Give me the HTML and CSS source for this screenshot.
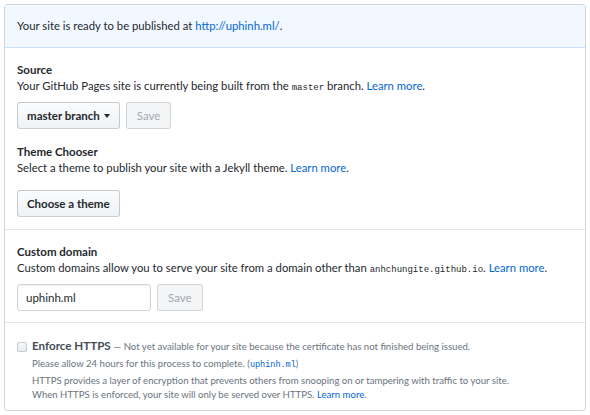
FILE: index.html
```html
<!DOCTYPE html>
<html>
<head>
<meta charset="utf-8">
<link rel="stylesheet" href="styles.css">
</head>
<body>
<div class="box">
  <div class="flash">Your site is ready to be published at <a href="#">http://uphinh.ml/</a>.</div>
  <div class="section">
    <div class="label">Source</div>
    <p class="desc">Your GitHub Pages site is currently being built from the <code>master</code> branch. <a href="#">Learn more</a>.</p>
    <div class="row">
      <button class="btn">master branch <span class="caret"></span></button>
      <button class="btn disabled">Save</button>
    </div>
    <div class="label theme-label">Theme Chooser</div>
    <p class="desc">Select a theme to publish your site with a Jekyll theme. <a href="#">Learn more</a>.</p>
    <div class="row row-theme">
      <button class="btn">Choose a theme</button>
    </div>
  </div>
  <div class="section domain">
    <div class="label">Custom domain</div>
    <p class="desc">Custom domains allow you to serve your site from a domain other than <code>anhchungite.github.io</code>. <a href="#">Learn more</a>.</p>
    <div class="row row-domain">
      <input class="input" type="text" value="uphinh.ml">
      <button class="btn disabled">Save</button>
    </div>
  </div>
  <div class="section https">
    <div class="check-row">
      <span class="checkbox"></span>
      <div class="check-body">
        <div class="check-title"><strong>Enforce HTTPS</strong> <span class="note">— Not yet available for your site because the certificate has not finished being issued.</span></div>
        <p class="note">Please allow 24 hours for this process to complete. (<a href="#" class="mono">uphinh.ml</a>)</p>
        <p class="note">HTTPS provides a layer of encryption that prevents others from snooping on or tampering with traffic to your site.</p>
        <p class="note">When HTTPS is enforced, your site will only be served over HTTPS. <a href="#">Learn more</a>.</p>
      </div>
    </div>
  </div>
</div>
</body>
</html>
```
FILE: styles.css
```css
* { box-sizing: border-box; }
body {
  margin: 4px 4px 0 4px;
  font-family: "Lato", "Noto Sans", sans-serif;
  font-size: 11.3px;
  color: #24292e;
  background: #fff;
}
a { color: #0366d6; text-decoration: none; }
p { margin: 0; }
.box {
  border: 1px solid #d1d5da;
  border-radius: 3px;
  height: 407px;
}
.flash {
  background: #f1f8ff;
  border-bottom: 1px solid #c8e1ff;
  padding: 0 12px;
  height: 43px;
  line-height: 42px;
  color: #24292e;
}
.section {
  padding: 13px 12px 12px 12px;
  border-bottom: 1px solid #e1e4e8;
}
.domain { padding-bottom: 11px; }
.label {
  font-weight: 700;
  line-height: 17px;
  font-size: 11.5px;
}
.theme-label { margin-top: 14px; }
.desc {
  line-height: 16px;
}
code {
  font-family: "Liberation Mono", "DejaVu Sans Mono", monospace;
  font-size: 9px;
}
.row {
  display: flex;
  gap: 6px;
  margin-top: 6px;
}
.row-theme { margin-top: 14px; }
.row-domain { margin-top: 6px; }
.btn {
  font-family: inherit;
  font-size: 11.5px;
  font-weight: 700;
  color: #24292e;
  height: 27px;
  padding: 0 9px;
  border: 1px solid rgba(27,31,35,0.2);
  border-radius: 3px;
  background: linear-gradient(#fafbfc, #eff3f6);
  display: flex;
  align-items: center;
  gap: 4px;
}
.btn.disabled {
  color: #a3aab1;
  font-weight: 400;
  background: #f3f5f7;
  border-color: rgba(27,31,35,0.15);
  padding: 0 10px;
}
.caret {
  width: 0; height: 0;
  border-left: 3.5px solid transparent;
  border-right: 3.5px solid transparent;
  border-top: 4px solid #24292e;
}
.input {
  font-family: inherit;
  font-size: 11.5px;
  color: #24292e;
  width: 134px;
  height: 27px;
  padding: 0 8px;
  border: 1px solid #d1d5da;
  border-radius: 3px;
  box-shadow: inset 0 1px 2px rgba(27,31,35,0.075);
}
.https {
  border-bottom: none;
  padding-top: 13px;
}
.check-row { display: flex; gap: 5px; }
.checkbox {
  width: 10px; height: 10px;
  margin-top: 6px;
  border: 1px solid #c6cbd1;
  border-radius: 2px;
  background: linear-gradient(#f6f8fa, #e8ebee);
  flex: none;
}
.check-title { line-height: 20px; }
.check-title strong { font-size: 11.6px; font-weight: 700; color: #444d56; }
.note { color: #6a737d; font-size: 9.6px; line-height: 15px; }
.note:last-child { line-height: 14px; }
.mono { font-family: "Liberation Mono", "DejaVu Sans Mono", monospace; font-size: 8.5px; }
```
